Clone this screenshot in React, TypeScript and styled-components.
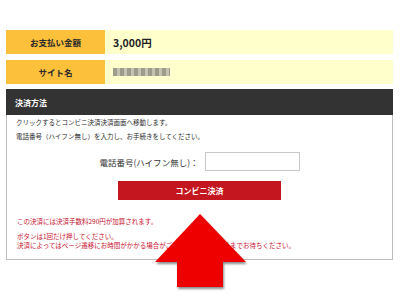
import styled, { createGlobalStyle } from "styled-components";

const GlobalStyle = createGlobalStyle`
  body {
    margin: 0;
    background: #ffffff;
    font-family: "Noto Sans CJK JP", "Noto Sans", sans-serif;
  }
`;

const Page = styled.div`
  position: relative;
  width: 400px;
  height: 300px;
  box-sizing: border-box;
  padding: 30px 7px 0 6px;
  overflow: hidden;
`;

const InfoRow = styled.div`
  display: grid;
  grid-template-columns: 99px 1fr;
  height: 24px;
  margin-bottom: 6px;
`;

const Label = styled.div`
  background: #fcc03a;
  color: #2a2a2a;
  font-size: 8.5px;
  font-weight: 700;
  display: flex;
  align-items: center;
  justify-content: center;
`;

const Value = styled.div`
  background: #ffffcc;
  color: #222;
  font-size: 10.5px;
  font-weight: 700;
  display: flex;
  align-items: center;
  padding-left: 8px;
`;

const Blurred = styled.span`
  display: inline-block;
  width: 57px;
  height: 8px;
  background: repeating-linear-gradient(
    90deg,
    #8c8c80 0 4px,
    #b9b9ab 4px 7px
  );
  filter: blur(0.6px);
  opacity: 0.85;
`;

const Panel = styled.div`
  margin-top: -1px;
`;

const PanelHeader = styled.div`
  background: #333333;
  color: #ffffff;
  font-size: 8px;
  font-weight: 700;
  height: 26px;
  display: flex;
  align-items: center;
  padding-left: 9px;
`;

const PanelBody = styled.div`
  border: 1px solid #bdbdbd;
  border-top: none;
  padding: 0 9px 11px;
  height: 145px;
  box-sizing: border-box;
`;

const Intro = styled.p`
  margin: 0;
  font-size: 6.5px;
  line-height: 14px;
  color: #2b2b2b;
`;

const FormRow = styled.div`
  display: flex;
  justify-content: center;
  align-items: center;
  gap: 6px;
  margin-top: 9px;
`;

const FieldLabel = styled.label`
  font-size: 8.5px;
  color: #333;
`;

const PhoneInput = styled.input`
  width: 95px;
  height: 19px;
  box-sizing: border-box;
  border: 1px solid #c8c8c8;
  padding: 0 4px;
  font-size: 8px;
  outline: none;
`;

const PayButton = styled.button`
  display: block;
  margin: 10px auto 0;
  width: 163px;
  height: 19px;
  border: none;
  background: #c4161e;
  color: #ffffff;
  font-family: inherit;
  font-size: 8px;
  font-weight: 700;
  padding: 0;
`;

const Notice = styled.p<{ $gap?: number }>`
  margin: ${(p) => p.$gap ?? 0}px 0 0 1px;
  font-size: 6.5px;
  line-height: 9.5px;
  color: #c8102e;
  white-space: nowrap;
`;

const ArrowWrap = styled.div`
  position: absolute;
  left: 150px;
  top: 210px;
  width: 100px;
  height: 82px;
  filter: drop-shadow(1px 2px 1px rgba(0, 0, 0, 0.45));
`;

export default function App() {
  return (
    <>
      <GlobalStyle />
      <Page>
        <InfoRow>
          <Label>お支払い金額</Label>
          <Value>3,000円</Value>
        </InfoRow>
        <InfoRow>
          <Label>サイト名</Label>
          <Value>
            <Blurred />
          </Value>
        </InfoRow>
        <Panel>
          <PanelHeader>決済方法</PanelHeader>
          <PanelBody>
            <Intro>
              クリックするとコンビニ決済決済画面へ移動します。
              <br />
              電話番号（ハイフン無し）を入力し、お手続きをしてください。
            </Intro>
            <FormRow>
              <FieldLabel>電話番号(ハイフン無し)：</FieldLabel>
              <PhoneInput type="text" />
            </FormRow>
            <PayButton>コンビニ決済</PayButton>
            <Notice $gap={17}>この決済には決済手数料290円が加算されます。</Notice>
            <Notice $gap={5}>
              ボタンは1回だけ押してください。
              <br />
              決済によってはページ遷移にお時間がかかる場合がございます。完了するまでお待ちください。
            </Notice>
          </PanelBody>
        </Panel>
        <ArrowWrap>
          <svg width="100" height="82" viewBox="0 0 100 82">
            <polygon
              points="50,4 96,52 73,52 73,77 27,77 27,52 5,52"
              fill="#ee0000"
            />
          </svg>
        </ArrowWrap>
      </Page>
    </>
  );
}
